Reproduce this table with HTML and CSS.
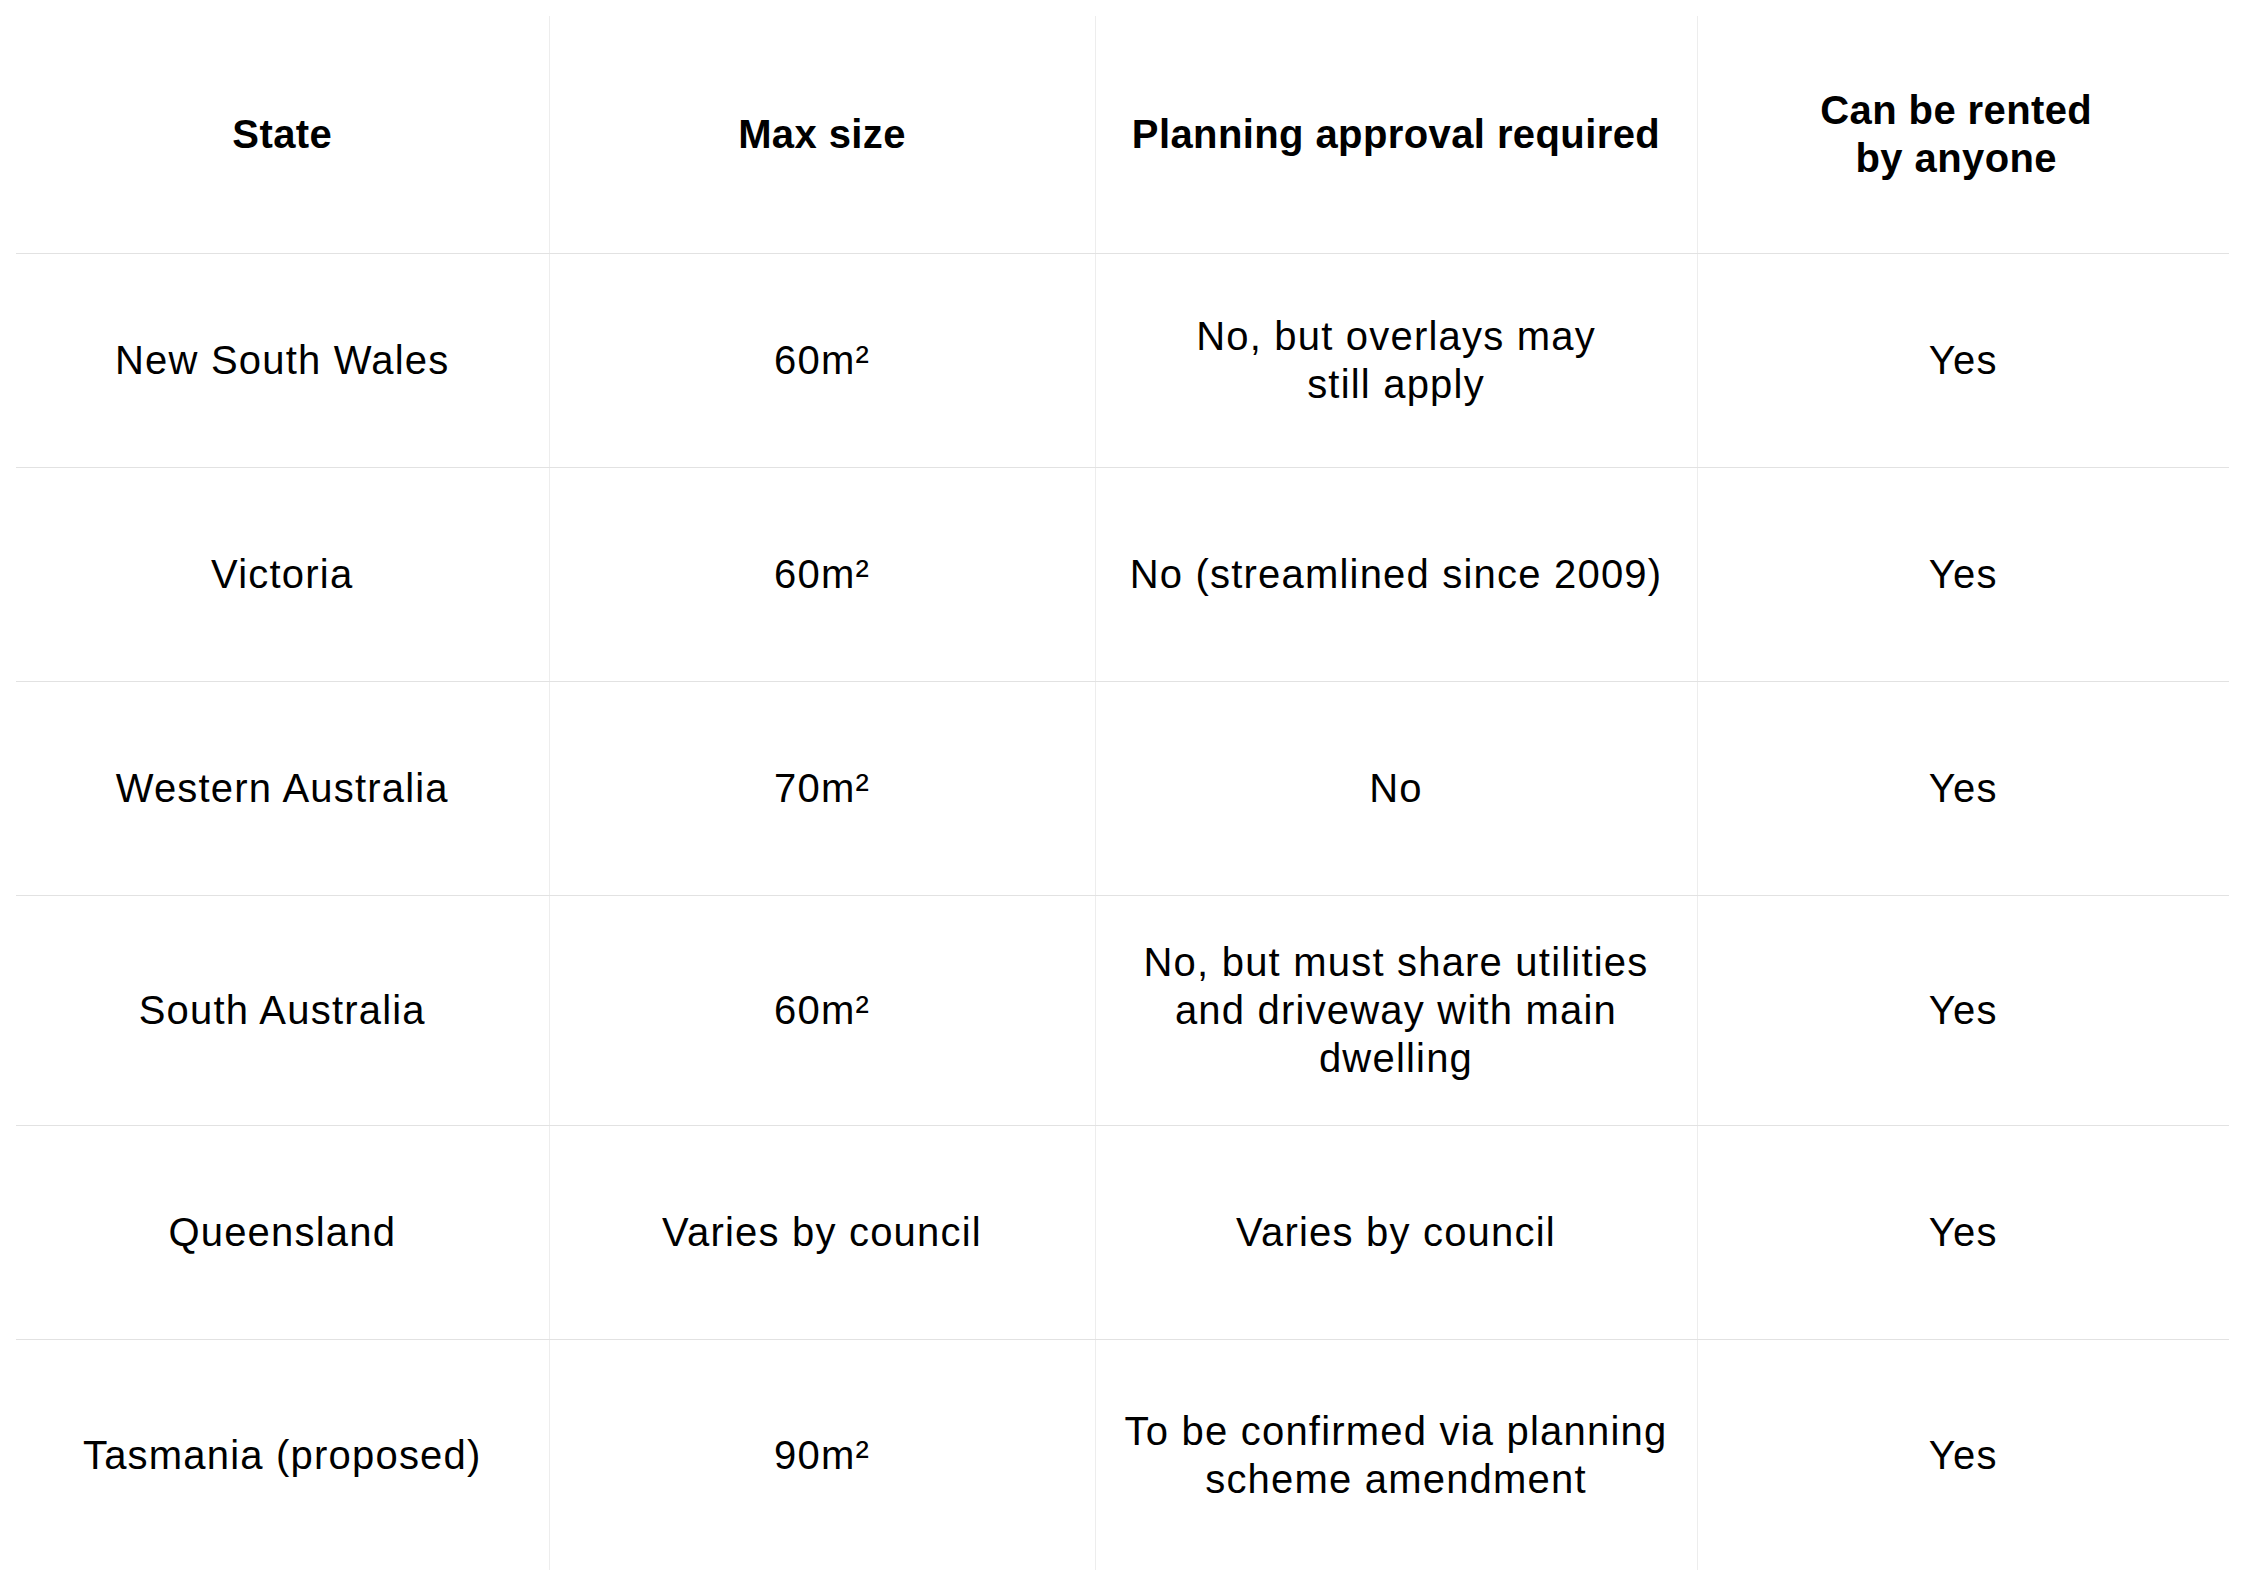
FILE: index.html
```html
<!DOCTYPE html>
<html lang="en">
<head>
<meta charset="utf-8">
<title>Granny flat rules by state</title>
<link rel="stylesheet" href="styles.css">
</head>
<body>
<div class="wrap">
<table class="rules">
  <colgroup>
    <col class="c-state">
    <col class="c-size">
    <col class="c-plan">
    <col class="c-rent">
  </colgroup>
  <thead>
    <tr class="row-head">
      <th>State</th>
      <th>Max size</th>
      <th>Planning approval required</th>
      <th class="last head-rent">Can be rented<br>by anyone</th>
    </tr>
  </thead>
  <tbody>
    <tr class="row">
      <td>New South Wales</td>
      <td>60m²</td>
      <td>No, but overlays may<br>still apply</td>
      <td class="last">Yes</td>
    </tr>
    <tr class="row">
      <td>Victoria</td>
      <td>60m²</td>
      <td>No (streamlined since 2009)</td>
      <td class="last">Yes</td>
    </tr>
    <tr class="row">
      <td>Western Australia</td>
      <td>70m²</td>
      <td>No</td>
      <td class="last">Yes</td>
    </tr>
    <tr class="row row-tall">
      <td>South Australia</td>
      <td>60m²</td>
      <td>No, but must share utilities<br>and driveway with main<br>dwelling</td>
      <td class="last">Yes</td>
    </tr>
    <tr class="row">
      <td>Queensland</td>
      <td>Varies by council</td>
      <td>Varies by council</td>
      <td class="last">Yes</td>
    </tr>
    <tr class="row row-end">
      <td>Tasmania (proposed)</td>
      <td>90m²</td>
      <td>To be confirmed via planning<br>scheme amendment</td>
      <td class="last">Yes</td>
    </tr>
  </tbody>
</table>
</div>
</body>
</html>
```
FILE: styles.css
```css
html, body {
  margin: 0;
  padding: 0;
  background: #ffffff;
}

.wrap {
  padding: 16px;
}

.rules {
  width: 2213px;
  table-layout: fixed;
  border-collapse: collapse;
  font-family: "Liberation Sans", Arial, Helvetica, sans-serif;
  font-size: 40px;
  line-height: 48px;
  letter-spacing: 1.2px;
  color: #000000;
}

.c-state { width: 533px; }
.c-size { width: 546px; }
.c-plan { width: 602px; }
.c-rent { width: 532px; }

.rules th,
.rules td {
  padding: 0 8px;
  text-align: center;
  vertical-align: middle;
  border-right: 1px solid #ededed;
  border-bottom: 1px solid #e2e2e2;
}

.rules th {
  font-weight: 700;
  letter-spacing: 0.4px;
}

.rules .last {
  border-right: none;
}

.rules .head-rent {
  padding-right: 22px;
}

.row-head { height: 237px; }
.row { height: 214px; }
.row-tall { height: 230px; }
.row-end { height: 231px; }

.row-end td {
  border-bottom: none;
}
```
